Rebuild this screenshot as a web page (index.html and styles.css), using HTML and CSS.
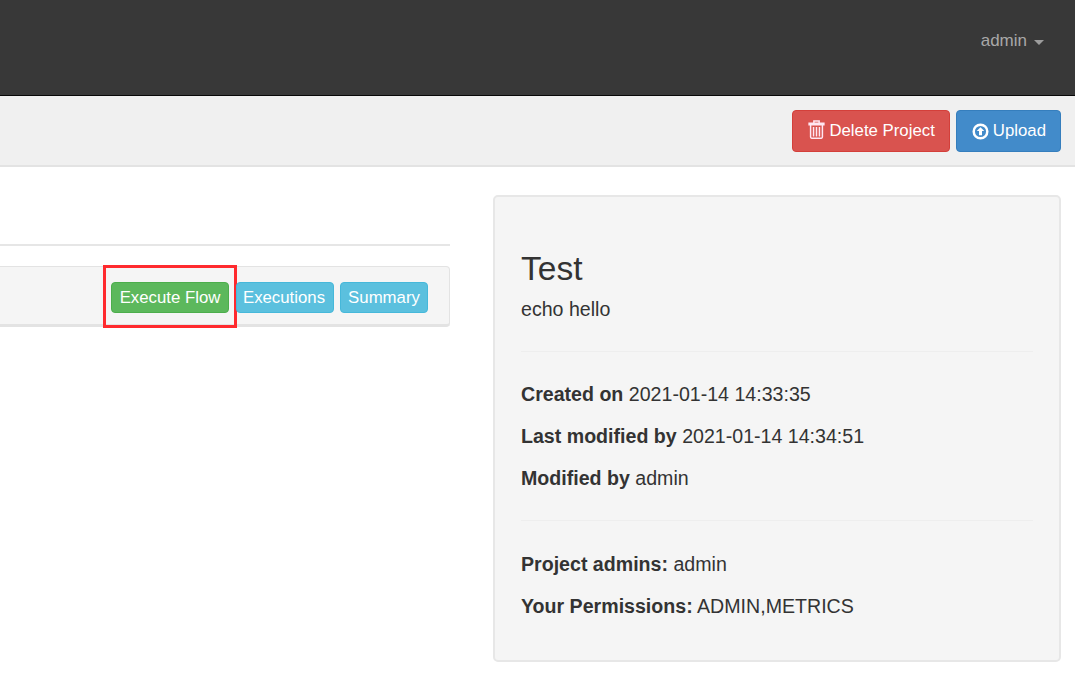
FILE: index.html
```html
<!DOCTYPE html>
<html lang="en">
<head>
<meta charset="utf-8">
<title>Project</title>
<link rel="stylesheet" href="styles.css">
</head>
<body>
<header class="navbar">
  <a class="user">admin<span class="caret"></span></a>
</header>
<div class="subheader">
  <button class="btn btn-lg btn-danger">
    <svg class="icon trash" viewBox="0 0 16 18" aria-hidden="true"><path d="M5.5 2.6V1h5v1.6M1 3h14v1.6H1zM2.4 5v11.2c0 .6.4 1 1 1h9.2c.6 0 1-.4 1-1V5M5.2 6.6v9M8 6.6v9M10.8 6.6v9" fill="none" stroke="currentColor" stroke-width="1.4"/></svg>
    Delete Project
  </button>
  <button class="btn btn-lg btn-primary">
    <svg class="icon" viewBox="0 0 18 18" aria-hidden="true"><circle cx="9" cy="9" r="7.2" fill="none" stroke="currentColor" stroke-width="2.6"/><path d="M9 4.4 13 8.6H10.6V13H7.4V8.6H5z" fill="currentColor"/></svg>
    Upload
  </button>
</div>
<main class="content">
  <section class="left">
    <hr class="rule">
    <div class="flow-row">
      <div class="flow-actions">
        <button class="btn btn-success">Execute Flow<span class="highlight"></span></button>
        <button class="btn btn-info">Executions</button>
        <button class="btn btn-info">Summary</button>
      </div>
    </div>
  </section>
  <aside class="well">
    <h3 class="title">Test</h3>
    <p class="desc">echo hello</p>
    <hr class="divider first">
    <p class="meta"><strong>Created on</strong> 2021-01-14 14:33:35</p>
    <p class="meta"><strong>Last modified by</strong> 2021-01-14 14:34:51</p>
    <p class="meta"><strong>Modified by</strong> admin</p>
    <hr class="divider second">
    <p class="meta"><strong>Project admins:</strong> admin</p>
    <p class="meta"><strong>Your Permissions:</strong> ADMIN,METRICS</p>
  </aside>
</main>
</body>
</html>
```
FILE: styles.css
```css
* { box-sizing: border-box; }
html, body { margin: 0; padding: 0; }
body {
  width: 1075px;
  height: 679px;
  overflow: hidden;
  background: #fff;
  color: #333;
  font-family: "Liberation Sans", Arial, sans-serif;
  font-size: 17px;
  line-height: 24px;
}
.navbar {
  height: 96px;
  background: #383838;
  border-bottom: 1px solid #080808;
  display: flex;
  justify-content: flex-end;
  padding: 29px 31px 0 0;
}
.user { color: #a8a8a8; height: 24px; display: flex; align-items: center; }
.caret {
  width: 0; height: 0;
  margin-left: 7px;
  margin-top: 3px;
  border-left: 5.5px solid transparent;
  border-right: 5.5px solid transparent;
  border-top: 5px solid #9d9d9d;
}
.subheader {
  height: 71px;
  background: #f0f0f0;
  border-bottom: 2px solid #e3e3e3;
  display: flex;
  justify-content: flex-end;
  gap: 6px;
  padding: 14px 14px 0 0;
}
.btn {
  position: relative;
  font: inherit;
  font-size: 16.8px;
  color: #fff;
  height: 31px;
  padding: 0 8px;
  border: 1px solid transparent;
  border-radius: 4px;
  display: inline-flex;
  align-items: center;
  justify-content: center;
  gap: 3px;
  white-space: nowrap;
}
.btn-lg { height: 42px; padding: 0 14px 0 15px; gap: 4px; }
.btn-danger { background: #d9534f; border-color: #d43f3a; }
.btn-primary { background: #428bca; border-color: #357ebd; }
.btn-success { background: #5cb85c; border-color: #4cae4c; }
.btn-info { background: #5bc0de; border-color: #46b8da; }
.icon { width: 17px; height: 17px; flex: none; }
.trash { height: 19px; margin-top: -3px; color: #ffe6f2; }
.content {
  display: flex;
  align-items: flex-start;
  gap: 43px;
  padding-top: 28px;
}
.left { width: 450px; padding-top: 49px; }
.rule { margin: 0 0 20px; border: 0; border-top: 2px solid #e6e6e6; }
.flow-row {
  height: 61px;
  background: #f5f5f5;
  border: 1px solid #e3e3e3;
  border-left: 0;
  border-bottom-width: 3px;
  border-radius: 0 4px 4px 0;
  display: flex;
  justify-content: flex-end;
  padding: 15px 21px 0 0;
}
.flow-actions { display: flex; gap: 6px; height: 31px; }
.flow-actions .btn-success { width: 118px; margin-right: 1px; }
.flow-actions .btn-info:nth-child(2) { width: 98px; padding-right: 10px; }
.flow-actions .btn-info:nth-child(3) { width: 88px; }
.highlight {
  position: absolute;
  left: -9px; top: -18px;
  width: 134px; height: 63px;
  border: 3px solid #ff2a2e;
  pointer-events: none;
}
.well {
  width: 568px;
  height: 467px;
  background: #f5f5f5;
  border: 2px solid #e7e7e7;
  border-radius: 5px;
  padding: 0 26px;
  font-size: 19.6px;
}
.title {
  margin: 50px 0 0;
  font-size: 33.5px;
  font-weight: 400;
  line-height: 44px;
}
.desc { margin: 6px 0 0; }
.divider { margin: 0; border: 0; border-top: 1px solid #eeeeee; }
.divider.first { margin-top: 30px; margin-bottom: 30px; }
.divider.second { margin-top: 30px; margin-bottom: 31px; }
.meta { margin: 0 0 18px; }
.meta:last-child { margin-bottom: 0; }
```
